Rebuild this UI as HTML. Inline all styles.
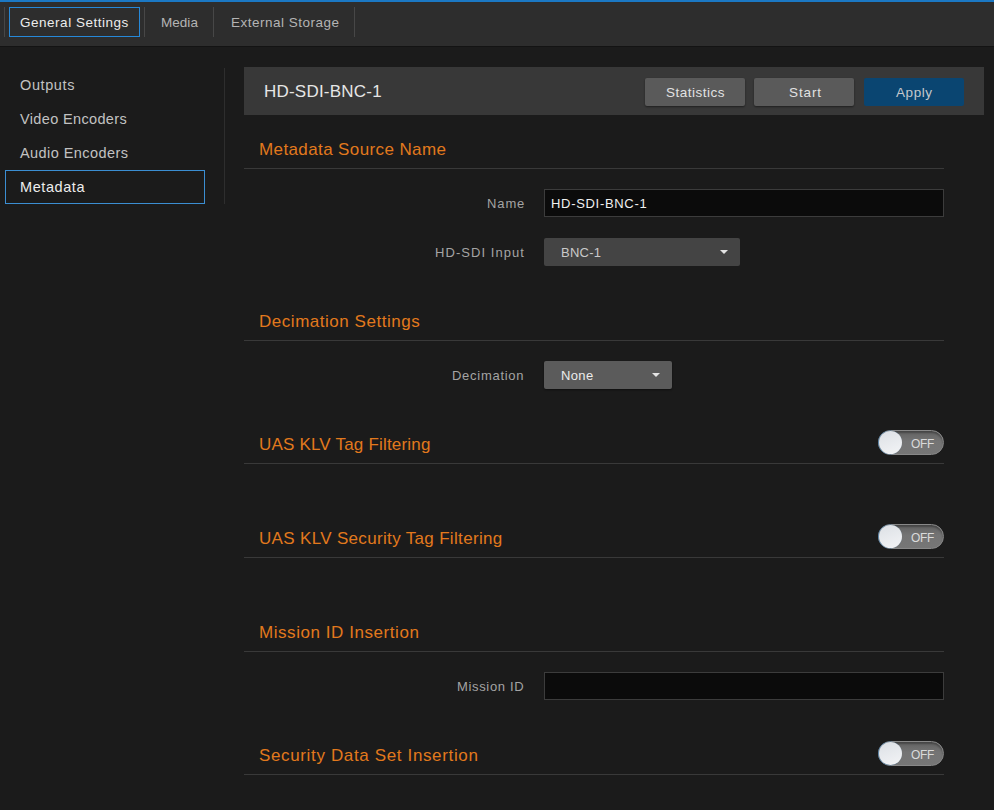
<!DOCTYPE html>
<html>
<head>
<meta charset="utf-8">
<style>
html,body{margin:0;padding:0;}
body{width:994px;height:810px;background:#1b1b1b;position:relative;overflow:hidden;font-family:"Liberation Sans",sans-serif;}
.a{position:absolute;white-space:nowrap;}
.t{position:absolute;white-space:nowrap;line-height:1;}
#topline{left:0;top:0;width:994px;height:2px;background:#1b78c4;}
#bar{left:0;top:2px;width:994px;height:44px;background:#2d2d2d;}
#barshadow{left:0;top:46px;width:994px;height:1px;background:#131313;}
.sep{width:1px;background:#474747;top:7px;height:30px;}
#tabsel{left:9px;top:7px;width:129px;height:28px;border:1px solid #2688d8;}
.tab{font-size:13.5px;top:15.5px;color:#b4b4b4;}
.side{font-size:14.5px;color:#c2c2c2;left:20px;}
#sidesel{left:5px;top:170px;width:198px;height:32px;border:1px solid #3b8ed2;}
#vsep{left:224px;top:68px;width:1px;height:136px;background:#2e2e2e;}
#panel{left:244px;top:67px;width:740px;height:48px;background:#383838;}
.btn{top:78px;width:100px;height:28px;background:#5a5a5a;border-radius:2px;box-shadow:0 1px 2px rgba(0,0,0,0.45);}
.btxt{font-size:13.5px;top:85.5px;color:#e2e2e2;}
.h{font-size:17px;color:#e2791d;left:259px;}
.hl{left:244px;width:700px;height:1px;background:#393939;}
.lbl{font-size:13px;color:#a4a4a4;}
.inp{left:544px;width:398px;height:26px;background:#0b0b0b;border:1px solid #3c3c3c;}
.sel{left:544px;height:28px;border-radius:2px;}
.arr{width:0;height:0;border-left:4px solid transparent;border-right:4px solid transparent;border-top:4px solid #e4e4e4;}
.tog{left:878px;width:66px;height:25px;box-sizing:border-box;border-radius:13px;border:1px solid #888888;background:linear-gradient(#626262,#747474 45%,#767676);box-shadow:inset 0 2px 2px rgba(0,0,0,0.3);}
.knob{left:879px;width:23px;height:23px;border-radius:50%;background:linear-gradient(160deg,#dce0e5,#f3f4f6);box-shadow:-0.5px 0 0 0.5px #5d86a8;}
.off{font-size:12px;color:#dadada;left:911px;letter-spacing:-0.3px;}
</style>
</head>
<body>
<div class="a" id="topline"></div>
<div class="a" id="bar"></div>
<div class="a" id="barshadow"></div>
<div class="a sep" style="left:4px"></div>
<div class="a" id="tabsel"></div>
<div class="t tab" style="left:20px;color:#ececec;letter-spacing:0.52px">General Settings</div>
<div class="a sep" style="left:144px"></div>
<div class="t tab" style="left:161px;letter-spacing:0.03px">Media</div>
<div class="a sep" style="left:213px"></div>
<div class="t tab" style="left:231px;letter-spacing:0.5px">External Storage</div>
<div class="a sep" style="left:354px"></div>

<div class="t side" style="top:77.9px;letter-spacing:0.6px">Outputs</div>
<div class="t side" style="top:111.9px;letter-spacing:0.35px">Video Encoders</div>
<div class="t side" style="top:145.9px;letter-spacing:0.43px">Audio Encoders</div>
<div class="a" id="sidesel"></div>
<div class="t side" style="top:179.6px;letter-spacing:0.57px;color:#ededed">Metadata</div>
<div class="a" id="vsep"></div>

<div class="a" id="panel"></div>
<div class="t" style="left:264px;top:82.8px;font-size:17px;color:#e6e6e6;letter-spacing:0.22px">HD-SDI-BNC-1</div>
<div class="a btn" style="left:645px"></div>
<div class="t btxt" style="left:666px;letter-spacing:0.51px">Statistics</div>
<div class="a btn" style="left:754px"></div>
<div class="t btxt" style="left:789px;letter-spacing:0.88px">Start</div>
<div class="a btn" style="left:864px;background:#0a4571;box-shadow:none"></div>
<div class="t btxt" style="left:896px;letter-spacing:0.56px;color:#c4c8cc">Apply</div>

<div class="t h" style="top:140.6px;letter-spacing:0.39px">Metadata Source Name</div>
<div class="a hl" style="top:168px"></div>
<div class="t lbl" style="left:487px;top:197px;letter-spacing:0.89px">Name</div>
<div class="a inp" style="top:189px"></div>
<div class="t" style="left:551px;top:197px;font-size:13px;color:#f0f0f0;letter-spacing:0.69px">HD-SDI-BNC-1</div>
<div class="t lbl" style="left:435px;top:246.2px;letter-spacing:1.05px">HD-SDI Input</div>
<div class="a sel" style="top:238px;width:196px;background:#444444"></div>
<div class="t" style="left:561px;top:246.2px;font-size:13px;color:#cacaca;letter-spacing:0.25px">BNC-1</div>
<div class="a arr" style="left:720px;top:250px"></div>

<div class="t h" style="top:312.6px;letter-spacing:0.53px">Decimation Settings</div>
<div class="a hl" style="top:340px"></div>
<div class="t lbl" style="left:452px;top:368.9px;letter-spacing:0.72px">Decimation</div>
<div class="a sel" style="top:361px;width:128px;background:#5b5b5b;box-shadow:0 1px 2px rgba(0,0,0,0.45)"></div>
<div class="t" style="left:561px;top:369px;font-size:13px;color:#ececec;letter-spacing:0.36px">None</div>
<div class="a arr" style="left:652px;top:373px"></div>

<div class="t h" style="top:435.6px;letter-spacing:0.19px">UAS KLV Tag Filtering</div>
<div class="a hl" style="top:463px"></div>
<div class="a tog" style="top:430px"></div>
<div class="a knob" style="top:431px"></div>
<div class="t off" style="top:437.5px">OFF</div>

<div class="t h" style="top:529.6px;letter-spacing:0.33px">UAS KLV Security Tag Filtering</div>
<div class="a hl" style="top:557px"></div>
<div class="a tog" style="top:524px"></div>
<div class="a knob" style="top:525px"></div>
<div class="t off" style="top:531.5px">OFF</div>

<div class="t h" style="top:623.6px;letter-spacing:0.56px">Mission ID Insertion</div>
<div class="a hl" style="top:651px"></div>
<div class="t lbl" style="left:457px;top:680.1px;letter-spacing:0.66px">Mission ID</div>
<div class="a inp" style="top:672px"></div>

<div class="t h" style="top:746.6px;letter-spacing:0.64px">Security Data Set Insertion</div>
<div class="a hl" style="top:774px"></div>
<div class="a tog" style="top:741px"></div>
<div class="a knob" style="top:742px"></div>
<div class="t off" style="top:748.5px">OFF</div>
</body>
</html>
